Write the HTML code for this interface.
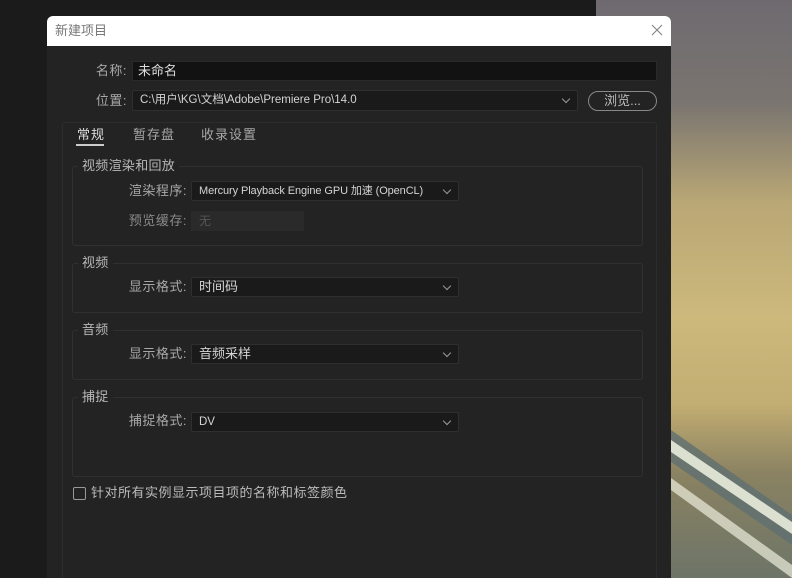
<!DOCTYPE html>
<html><head><meta charset="utf-8"><style>
*{margin:0;padding:0;box-sizing:border-box}
html,body{width:792px;height:578px;overflow:hidden}
body{position:relative;background:#1b1b1b;font-family:"Liberation Sans","Noto Sans CJK SC",sans-serif;font-size:13px;color:#c8c8c8}
.a{position:absolute}
.bgw{left:596px;top:0;width:196px;height:578px;overflow:hidden;background:linear-gradient(180deg,#6f6a70 0%,#7a7570 18%,#b9a775 35%,#cdb97c 55%,#c2ad72 70%,#8a8262 82%,#6d7568 100%)}
.dlg{left:47px;top:16px;width:624px;height:562px;background:#232323;border-radius:6px 6px 0 0;overflow:hidden}
.title{left:0;top:0;width:624px;height:30px;background:#fff;color:#777;font-size:13px;padding:6px 0 0 8px;line-height:17px}
.lbl{color:#a8a8a8;text-align:right;font-size:13px;line-height:16px;letter-spacing:0.5px}
.sel{background:#1a1a1a;border:1px solid #2f2f2f;border-radius:2px;height:20px;color:#d4d4d4;font-size:11.5px;padding:0 0 0 7px;line-height:18px;white-space:nowrap;overflow:hidden}
.sel:after{content:"";position:absolute;right:8px;top:5px;width:5px;height:5px;border-right:1px solid #999;border-bottom:1px solid #999;transform:rotate(45deg)}
.grp{border:1px solid #303030;border-radius:3px}
.gt{background:#232323;padding:0 4px;color:#b8b8b8;font-size:13px;line-height:16px;letter-spacing:0.3px}
</style></head><body>
<div class="a bgw">
<svg width="196" height="578" style="position:absolute;left:0;top:0">
 <polygon points="75,430 196,515 196,545 75,462" fill="#5f6f70" opacity="0.8"/>
 <polygon points="75,440 196,522 196,534 75,452" fill="#e8ecdc" opacity="0.9"/>
 <polygon points="75,478 196,565 196,578 75,490" fill="#eeeedd" opacity="0.7"/>
</svg>
</div>
<div class="a dlg">
 <div class="a title">新建项目</div>
 <svg class="a" style="left:604px;top:8px" width="12" height="12"><path d="M1 1L11 11M11 1L1 11" stroke="#888" stroke-width="1.2"/></svg>
 <div class="a lbl" style="left:38px;top:47px;width:42px">名称:</div>
 <div class="a" style="left:85px;top:45px;width:525px;height:20px;background:#121212;border:1px solid #2a2a2a;color:#ddd;padding:0 0 0 5px;line-height:18px">未命名</div>
 <div class="a lbl" style="left:38px;top:77px;width:42px">位置:</div>
 <div class="a sel" style="left:85px;top:74px;width:446px;height:21px;line-height:19px">C:\用户\KG\文档\Adobe\Premiere Pro\14.0</div>
 <div class="a" style="left:541px;top:75px;width:69px;height:20px;border:1px solid #888;border-radius:10px;color:#bbb;text-align:center;line-height:18px">浏览...</div>
 <div class="a" style="left:15px;top:106px;width:595px;height:456px;border:1px solid #2d2d2d;border-bottom:none;border-radius:3px 3px 0 0"></div>
 <div class="a" style="left:30px;top:111px;color:#ddd;letter-spacing:1px;line-height:16px">常规</div>
 <div class="a" style="left:29px;top:128px;width:28px;height:2px;background:#ccc"></div>
 <div class="a" style="left:86px;top:111px;color:#a8a8a8;letter-spacing:1px;line-height:16px">暂存盘</div>
 <div class="a" style="left:154px;top:111px;color:#a8a8a8;letter-spacing:1px;line-height:16px">收录设置</div>

 <div class="a grp" style="left:25px;top:150px;width:571px;height:80px"></div>
 <div class="a gt" style="left:31px;top:142px">视频渲染和回放</div>
 <div class="a lbl" style="left:60px;top:167px;width:80px">渲染程序:</div>
 <div class="a sel" style="left:144px;top:165px;width:268px;font-size:11px;letter-spacing:-0.1px">Mercury Playback Engine GPU 加速 (OpenCL)</div>
 <div class="a lbl" style="left:60px;top:197px;width:80px;color:#8a8a8a">预览缓存:</div>
 <div class="a" style="left:144px;top:195px;width:113px;height:20px;background:#2a2a2a;color:#555;font-size:12px;padding:0 0 0 8px;line-height:20px">无</div>

 <div class="a grp" style="left:25px;top:247px;width:571px;height:50px"></div>
 <div class="a gt" style="left:31px;top:239px">视频</div>
 <div class="a lbl" style="left:60px;top:263px;width:80px">显示格式:</div>
 <div class="a sel" style="left:144px;top:261px;width:268px;font-size:13px">时间码</div>

 <div class="a grp" style="left:25px;top:314px;width:571px;height:50px"></div>
 <div class="a gt" style="left:31px;top:306px">音频</div>
 <div class="a lbl" style="left:60px;top:330px;width:80px">显示格式:</div>
 <div class="a sel" style="left:144px;top:328px;width:268px;font-size:13px">音频采样</div>

 <div class="a grp" style="left:25px;top:381px;width:571px;height:80px"></div>
 <div class="a gt" style="left:31px;top:373px">捕捉</div>
 <div class="a lbl" style="left:60px;top:397px;width:80px">捕捉格式:</div>
 <div class="a sel" style="left:144px;top:396px;width:268px">DV</div>

 <div class="a" style="left:26px;top:471px;width:13px;height:13px;border:1px solid #999;border-radius:2px"></div>
 <div class="a" style="left:44px;top:469px;color:#bbb;letter-spacing:0.5px;line-height:16px">针对所有实例显示项目项的名称和标签颜色</div>
</div>
</body></html>
